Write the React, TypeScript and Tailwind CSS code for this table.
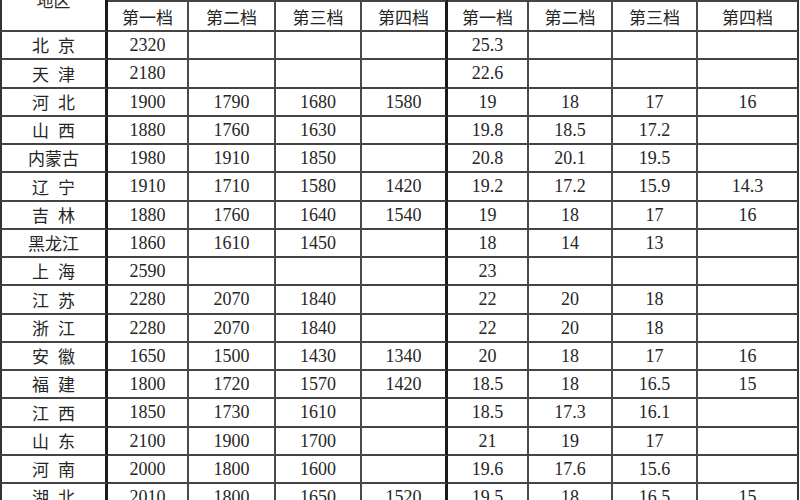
import React from "react";

type Row = [string, string[], string[]];

const rows: Row[] = [
  ["北京", ["2320", "", "", ""], ["25.3", "", "", ""]],
  ["天津", ["2180", "", "", ""], ["22.6", "", "", ""]],
  ["河北", ["1900", "1790", "1680", "1580"], ["19", "18", "17", "16"]],
  ["山西", ["1880", "1760", "1630", ""], ["19.8", "18.5", "17.2", ""]],
  ["内蒙古", ["1980", "1910", "1850", ""], ["20.8", "20.1", "19.5", ""]],
  ["辽宁", ["1910", "1710", "1580", "1420"], ["19.2", "17.2", "15.9", "14.3"]],
  ["吉林", ["1880", "1760", "1640", "1540"], ["19", "18", "17", "16"]],
  ["黑龙江", ["1860", "1610", "1450", ""], ["18", "14", "13", ""]],
  ["上海", ["2590", "", "", ""], ["23", "", "", ""]],
  ["江苏", ["2280", "2070", "1840", ""], ["22", "20", "18", ""]],
  ["浙江", ["2280", "2070", "1840", ""], ["22", "20", "18", ""]],
  ["安徽", ["1650", "1500", "1430", "1340"], ["20", "18", "17", "16"]],
  ["福建", ["1800", "1720", "1570", "1420"], ["18.5", "18", "16.5", "15"]],
  ["江西", ["1850", "1730", "1610", ""], ["18.5", "17.3", "16.1", ""]],
  ["山东", ["2100", "1900", "1700", ""], ["21", "19", "17", ""]],
  ["河南", ["2000", "1800", "1600", ""], ["19.6", "17.6", "15.6", ""]],
  ["湖北", ["2010", "1800", "1650", "1520"], ["19.5", "18", "16.5", "15"]],
];

const levels = ["第一档", "第二档", "第三档", "第四档"];

const cjk = "font-['Noto_Sans_CJK_SC',sans-serif]";
const num = "font-['Liberation_Serif','Noto_Sans_CJK_SC',serif]";

function Name({ name }: { name: string }) {
  const chars = name.split("");
  return (
    <div className={`flex items-center justify-center ${chars.length === 2 ? "gap-[9px]" : "gap-0"} ${cjk} text-[17px] text-[#262626]`}>
      {chars.map((c, i) => (
        <span key={i}>{c}</span>
      ))}
    </div>
  );
}

export default function App() {
  return (
    <div className="w-[800px] h-[500px] overflow-hidden bg-white">
      <div className="-mt-[30px] grid grid-cols-[108px_81px_87px_86px_86px_81px_84px_85px_101px] grid-rows-[32px_30px_repeat(17,28.25px)] text-[#262626]">
        {/* 地区 header spanning two rows */}
        <div className={`row-span-2 flex items-center justify-center border-l-2 border-r-[3px] border-b-2 border-l-[#333] border-r-[#1a1a1a] border-b-[#444] ${cjk} text-[17px]`}>
          地区
        </div>
        <div className="col-span-4 border-r-[3px] border-b-2 border-r-[#1a1a1a] border-b-[#444]" />
        <div className="col-span-4 border-r-2 border-b-2 border-r-[#333] border-b-[#444]" />
        {levels.concat(levels).map((l, i) => (
          <div
            key={i}
            className={`flex items-center justify-center border-b-2 border-b-[#444] ${
              i === 3 ? "border-r-[3px] border-r-[#1a1a1a]" : i === 7 ? "border-r-2 border-r-[#333]" : "border-r-2 border-r-[#4a4a4a]"
            } ${cjk} text-[17px] pt-[1px]`}
          >
            {l}
          </div>
        ))}
        {rows.map(([name, a, b], ri) => (
          <React.Fragment key={ri}>
            <div className="flex items-center justify-center border-l-2 border-r-[3px] border-b-2 border-l-[#333] border-r-[#1a1a1a] border-b-[#444]">
              <Name name={name} />
            </div>
            {a.concat(b).map((v, i) => (
              <div
                key={i}
                className={`flex items-center justify-center border-b-2 border-b-[#444] ${
                  i === 3 ? "border-r-[3px] border-r-[#1a1a1a]" : i === 7 ? "border-r-2 border-r-[#333]" : "border-r-2 border-r-[#4a4a4a]"
                } ${num} text-[18px] pt-[1px]`}
              >
                {v}
              </div>
            ))}
          </React.Fragment>
        ))}
      </div>
    </div>
  );
}
